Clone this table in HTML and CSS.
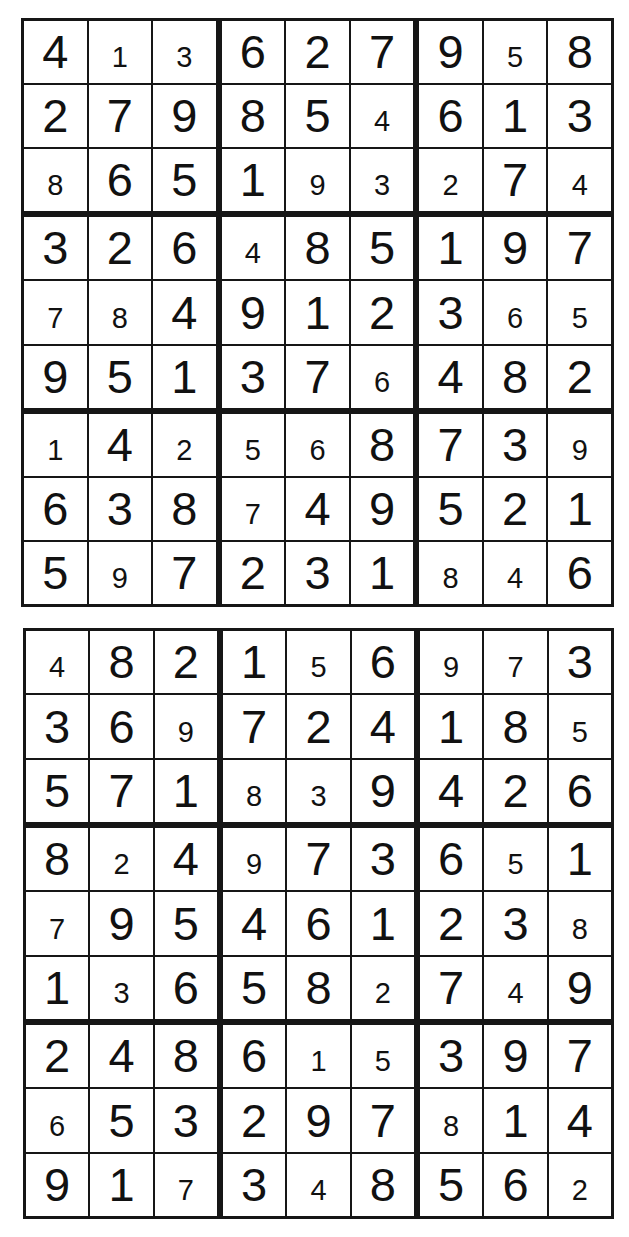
FILE: index.html
```html
<!DOCTYPE html>
<html lang="en">
<head>
    <meta charset="UTF-8">
    <title>Sudoku</title>
    <link rel="stylesheet" href="styles.css">
</head>
<body>

    <div class="board board-top" id="board1"></div>
    <div class="board board-bottom" id="board2"></div>

    <script>
        // givens are big, the rest is filled in small
        var boards = {
            board1: {
                given: ["400627908", "279850613", "065100070",
                        "326085197", "004912300", "951370482",
                        "040008730", "638049521", "507231006"],
                solved: ["413627958", "279854613", "865193274",
                         "326485197", "784912365", "951376482",
                         "142568739", "638749521", "597231846"]
            },
            board2: {
                given: ["082106003", "360724180", "571009426",
                        "804073601", "095461230", "106580709",
                        "248600397", "053297014", "910308560"],
                solved: ["482156973", "369724185", "571839426",
                         "824973651", "795461238", "136582749",
                         "248615397", "653297814", "917348562"]
            }
        };

        for (var id in boards) {
            var el = document.getElementById(id);
            var data = boards[id];
            for (var b = 0; b < 9; b++) {
                var box = document.createElement('div');
                box.className = 'box';
                for (var k = 0; k < 9; k++) {
                    var r = Math.floor(b / 3) * 3 + Math.floor(k / 3);
                    var c = (b % 3) * 3 + k % 3;
                    var cell = document.createElement('div');
                    var isGiven = data.given[r][c] !== '0';
                    cell.className = 'cell ' + (isGiven ? 'big' : 'small');
                    cell.textContent = data.solved[r][c];
                    box.appendChild(cell);
                }
                el.appendChild(box);
            }
        }
    </script>
</body>
</html>
```

FILE: styles.css
```css
body {
    margin: 0;
    background: #fff;
    font-family: "Liberation Sans", Arial, sans-serif;
    color: #111;
}
.board {
    display: grid;
    grid-template-columns: repeat(3, 1fr);
    grid-template-rows: repeat(3, 1fr);
    gap: 6px;
    background: #161616;
    border: 3px solid #161616;
    box-sizing: border-box;
}
.board-top {
    width: 593px;
    height: 589px;
    margin: 18px 0 0 21px;
}
.board-bottom {
    width: 591px;
    height: 591px;
    margin: 21px 0 0 23px;
}
.box {
    display: grid;
    grid-template-columns: repeat(3, 1fr);
    grid-template-rows: repeat(3, 1fr);
    gap: 2px;
}
.cell {
    background: #fff;
    display: flex;
    align-items: flex-end;
    justify-content: center;
    line-height: 1;
}
.big {
    font-size: 47px;
    padding-bottom: 8px;
}
.small {
    font-size: 29px;
    padding-bottom: 11px;
}
```
